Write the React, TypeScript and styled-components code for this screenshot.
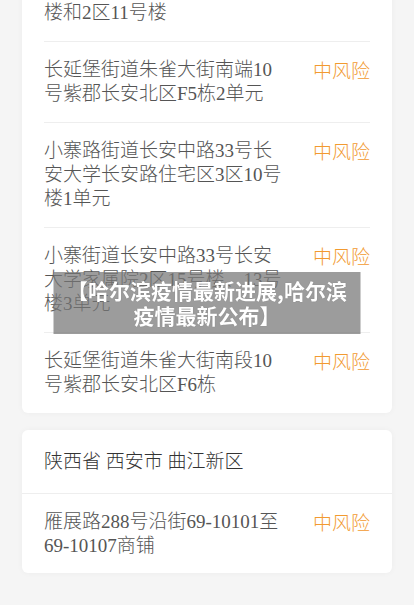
import React from "react";
import styled, { createGlobalStyle } from "styled-components";

const GlobalStyle = createGlobalStyle`
  body {
    margin: 0;
    background: #f5f5f5;
    font-family: "Liberation Serif", "Noto Sans CJK SC", serif;
  }
`;

const Page = styled.div`
  margin-top: -39px;
  padding: 0 22px 30px;
  display: flex;
  flex-direction: column;
  gap: 17px;
`;

const Card = styled.div<{ inset?: boolean }>`
  background: #fff;
  border-radius: 6px;
  box-shadow: 0 0 6px rgba(0, 0, 0, 0.04);
  padding: ${(p) => (p.inset ? "0 22px" : "0")};
`;

const AreaTitle = styled.div`
  padding: 20px 22px 19px;
  font-size: 19px;
  line-height: 24px;
  font-weight: 300;
  color: #333;
`;

const Row = styled.div<{ inset?: boolean }>`
  display: flex;
  justify-content: space-between;
  align-items: flex-start;
  padding: ${(p) => (p.inset ? "16px 0" : "16px 22px 15px")};
  border-top: 1px solid #eee;
  &:first-child {
    border-top: none;
  }
`;

const Address = styled.div`
  width: 240px;
  font-size: 19px;
  line-height: 24px;
  font-weight: 300;
  color: #555;
`;

const Level = styled.span`
  font-family: "Noto Sans CJK SC", sans-serif;
  font-size: 19px;
  line-height: 24px;
  font-weight: 300;
  color: #f29a30;
  white-space: nowrap;
`;

const Banner = styled.div`
  position: fixed;
  top: 50%;
  left: 50%;
  transform: translate(-50%, -50%);
  width: 307px;
  box-sizing: border-box;
  padding: 6px 10px;
  background: rgba(118, 118, 118, 0.72);
  color: #fff;
  font-family: "Noto Sans CJK SC", sans-serif;
  font-weight: 700;
  font-size: 21px;
  line-height: 25px;
  text-align: center;
  text-shadow: 0 0 1px rgba(0, 0, 0, 0.3);
`;

const firstArea = [
  "长安路33号长安大学1区10号楼和2区11号楼",
  "长延堡街道朱雀大街南端10号紫郡长安北区F5栋2单元",
  "小寨路街道长安中路33号长安大学长安路住宅区3区10号楼1单元",
  "小寨街道长安中路33号长安大学家属院2区15号楼、13号楼3单元",
  "长延堡街道朱雀大街南段10号紫郡长安北区F6栋",
];

const secondArea = ["雁展路288号沿街69-10101至69-10107商铺"];

export default function App() {
  return (
    <>
      <GlobalStyle />
      <Page>
        <Card inset>
          {firstArea.map((a, i) => (
            <Row inset key={i}>
              <Address>{a}</Address>
              <Level>中风险</Level>
            </Row>
          ))}
        </Card>
        <Card>
          <AreaTitle>陕西省 西安市 曲江新区</AreaTitle>
          {secondArea.map((a, i) => (
            <Row key={i}>
              <Address>{a}</Address>
              <Level>中风险</Level>
            </Row>
          ))}
        </Card>
      </Page>
      <Banner>【哈尔滨疫情最新进展,哈尔滨疫情最新公布】</Banner>
    </>
  );
}
